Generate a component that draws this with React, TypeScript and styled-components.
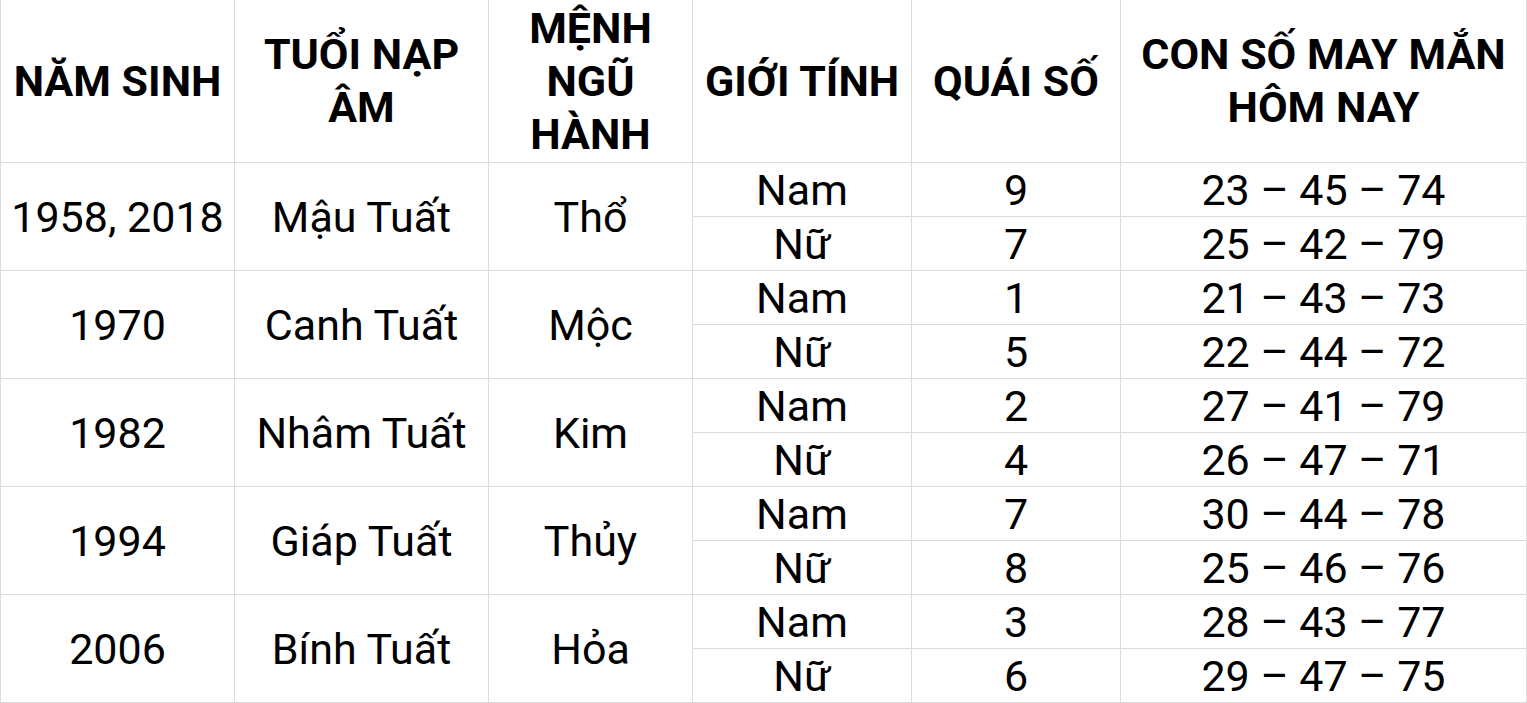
import React from 'react';
import styled, { createGlobalStyle } from 'styled-components';

const GlobalStyle = createGlobalStyle`
	html, body {
		margin: 0;
		padding: 0;
		background: #fff;
	}
	body {
		font-family: Roboto, 'Liberation Sans', Arial, sans-serif;
		color: #000;
	}
`;

const Table = styled.table`
	border-collapse: collapse;
	table-layout: fixed;
	width: 1527px;
`;

const HeadCell = styled.th`
	height: 162px;
	padding: 0;
	border: 1px solid #dcdcdc;
	border-top: none;
	font-size: 43px;
	font-weight: 700;
	line-height: 53px;
	text-align: center;
	vertical-align: middle;
`;

const Cell = styled.td`
	height: 53px;
	padding: 0;
	border: 1px solid #dcdcdc;
	font-size: 43px;
	font-weight: 400;
	line-height: 48px;
	text-align: center;
	vertical-align: middle;
	white-space: nowrap;
`;

interface Group {
	years: string;
	napAm: string;
	menh: string;
	nam: { quai: string; so: string };
	nu: { quai: string; so: string };
}

const widths = [234, 254, 204, 219, 209, 406];

const headers: React.ReactNode[] = [
	'NĂM SINH',
	<>TUỔI NẠP<br />ÂM</>,
	<>MỆNH<br />NGŨ<br />HÀNH</>,
	'GIỚI TÍNH',
	'QUÁI SỐ',
	<>CON SỐ MAY MẮN<br />HÔM NAY</>
];

const groups: Group[] = [
	{ years: '1958, 2018', napAm: 'Mậu Tuất', menh: 'Thổ', nam: { quai: '9', so: '23 – 45 – 74' }, nu: { quai: '7', so: '25 – 42 – 79' } },
	{ years: '1970', napAm: 'Canh Tuất', menh: 'Mộc', nam: { quai: '1', so: '21 – 43 – 73' }, nu: { quai: '5', so: '22 – 44 – 72' } },
	{ years: '1982', napAm: 'Nhâm Tuất', menh: 'Kim', nam: { quai: '2', so: '27 – 41 – 79' }, nu: { quai: '4', so: '26 – 47 – 71' } },
	{ years: '1994', napAm: 'Giáp Tuất', menh: 'Thủy', nam: { quai: '7', so: '30 – 44 – 78' }, nu: { quai: '8', so: '25 – 46 – 76' } },
	{ years: '2006', napAm: 'Bính Tuất', menh: 'Hỏa', nam: { quai: '3', so: '28 – 43 – 77' }, nu: { quai: '6', so: '29 – 47 – 75' } }
];

function App() {
	return (
		<>
			<GlobalStyle />
			<Table>
				<colgroup>
					{widths.map((w, i) => (
						<col key={i} style={{ width: w }} />
					))}
				</colgroup>
				<thead>
					<tr>
						{headers.map((h, i) => (
							<HeadCell key={i}>{h}</HeadCell>
						))}
					</tr>
				</thead>
				<tbody>
					{groups.map((g) => (
						<React.Fragment key={g.years}>
							<tr>
								<Cell rowSpan={2}>{g.years}</Cell>
								<Cell rowSpan={2}>{g.napAm}</Cell>
								<Cell rowSpan={2}>{g.menh}</Cell>
								<Cell>Nam</Cell>
								<Cell>{g.nam.quai}</Cell>
								<Cell>{g.nam.so}</Cell>
							</tr>
							<tr>
								<Cell>Nữ</Cell>
								<Cell>{g.nu.quai}</Cell>
								<Cell>{g.nu.so}</Cell>
							</tr>
						</React.Fragment>
					))}
				</tbody>
			</Table>
		</>
	);
}

export default App;
